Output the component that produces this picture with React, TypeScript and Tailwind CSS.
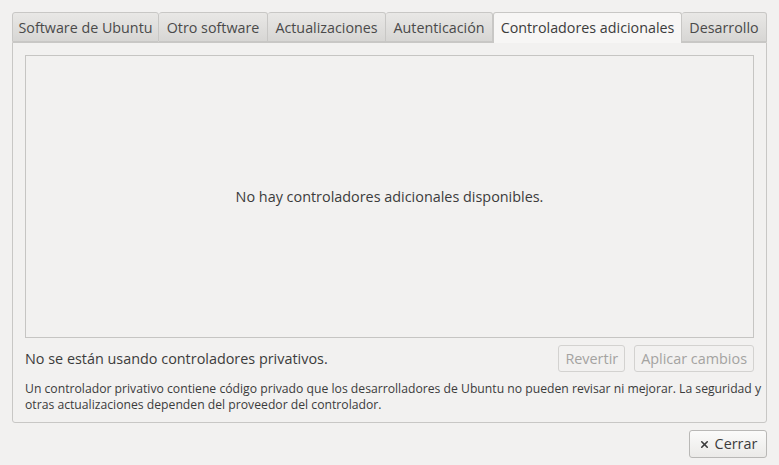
import { X } from "lucide-react";

const tabs = [
  { label: "Software de Ubuntu", w: "w-[147px]" },
  { label: "Otro software", w: "w-[109px]" },
  { label: "Actualizaciones", w: "w-[118px]" },
  { label: "Autenticación", w: "w-[107px]" },
  { label: "Controladores adicionales", w: "w-[189px]", active: true },
  { label: "Desarrollo", w: "w-[85px]" },
];

export default function App() {
  return (
    <div className="w-[779px] h-[465px] bg-[#f2f1f0] text-[#3c3c3c] font-['Open_Sans',sans-serif] px-3 pt-3 flex flex-col">
      {/* pestañas */}
      <div className="flex items-end h-[30px]">
        {tabs.map((t) =>
          t.active ? (
            <div
              key={t.label}
              className={`${t.w} h-[31px] -mb-px z-10 flex items-center justify-center text-[14.3px] bg-[#f7f6f5] border border-b-0 border-[#c8c7c5] rounded-t-[3px] text-[#3c3c3c]`}
            >
              {t.label}
            </div>
          ) : (
            <div
              key={t.label}
              className={`${t.w} h-[30px] flex items-center justify-center pt-[2px] text-[14.3px] bg-gradient-to-b from-[#e9e8e6] to-[#d7d6d4] border border-[#c8c7c5] border-l-0 first:border-l rounded-t-[3px] text-[#4a4a4a]`}
            >
              {t.label}
            </div>
          )
        )}
      </div>

      {/* contenido */}
      <div className="w-[755px] h-[381px] border border-[#c8c7c5] rounded-b-[3px] bg-[#f2f1f0] px-3 pt-3 flex flex-col">
        <div className="h-[283px] border border-[#c6c5c3] flex items-center justify-center text-[14.4px]">
          No hay controladores adicionales disponibles.
        </div>

        <div className="flex items-center justify-between mt-[7px] h-[27px]">
          <span className="text-[14.4px]">No se están usando controladores privativos.</span>
          <div className="flex gap-[9px]">
            <button className="h-[27px] px-[6px] rounded-[3px] border border-[#d3d2d0] text-[14.4px] text-[#a4a3a1]">
              Revertir
            </button>
            <button className="h-[27px] px-[6px] rounded-[3px] border border-[#d3d2d0] text-[14.4px] text-[#a4a3a1]">
              Aplicar cambios
            </button>
          </div>
        </div>

        <p className="mt-[9px] text-[12.2px] leading-[16px] whitespace-nowrap">
          Un controlador privativo contiene código privado que los desarrolladores de Ubuntu no pueden revisar ni mejorar. La seguridad y
          <br />
          otras actualizaciones dependen del proveedor del controlador.
        </p>
      </div>

      <div className="flex justify-end mt-[7px]">
        <button className="h-[28px] w-[78px] flex items-center justify-center gap-[5px] rounded-[3px] border border-[#b9b8b6] bg-gradient-to-b from-[#fbfbfa] to-[#ebeae8] text-[14.4px] text-[#3c3c3c]">
          <X size={11} strokeWidth={3.5} />
          Cerrar
        </button>
      </div>
    </div>
  );
}
